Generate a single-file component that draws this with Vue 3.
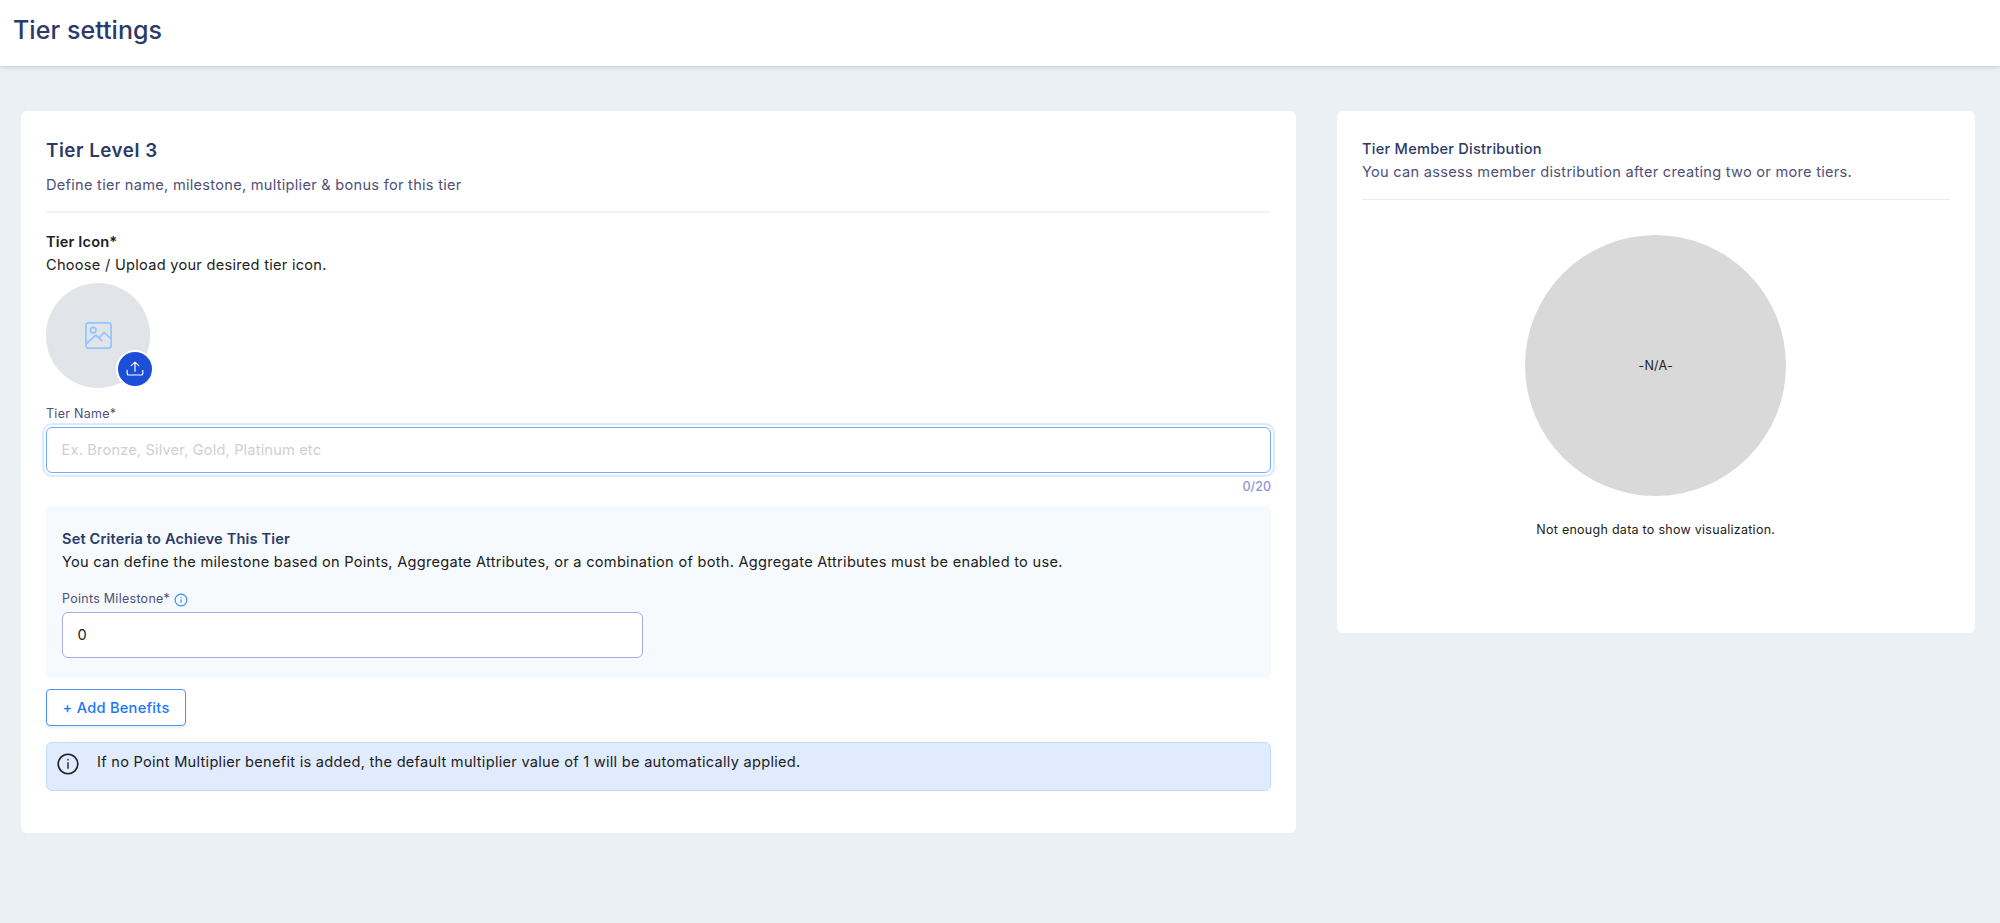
<template>
    <div class="page">
        <header class="header">
            <h1>Tier settings</h1>
        </header>

        <main class="content">
            <section class="card tier-card">
                <h2>Tier Level {{ tierLevel }}</h2>
                <p class="muted subtitle">Define tier name, milestone, multiplier &amp; bonus for this tier</p>
                <hr>

                <h4 class="dark">Tier Icon*</h4>
                <p>Choose / Upload your desired tier icon.</p>
                <div class="tier-icon">
                    <svg class="image-icon" viewBox="0 0 27 27" fill="none" stroke="currentColor" stroke-width="1.7">
                        <rect x="0.9" y="0.9" width="25.2" height="25.2" rx="2.6" />
                        <circle cx="8.2" cy="8.1" r="2.8" />
                        <path d="M1 22 L10.8 13.2 L17.2 19.2 M13.8 16 L19.2 10.4 L26 17" stroke-linejoin="round" />
                    </svg>
                    <button class="upload" type="button" aria-label="Upload">
                        <svg viewBox="0 0 18 16" fill="none" stroke="currentColor" stroke-width="1.2" stroke-linecap="round" stroke-linejoin="round">
                            <path d="M9 10.2 V1.4 M5.2 4.6 L9 1.3 L12.8 4.6" />
                            <path d="M1.2 9.4 V12.4 Q1.2 14 2.8 14 H15.2 Q16.8 14 16.8 12.4 V9.4" />
                        </svg>
                    </button>
                </div>

                <label class="field-label" for="tierName">Tier Name*</label>
                <input id="tierName" v-model="tierName" class="field focused" type="text" :maxlength="maxLength" placeholder="Ex. Bronze, Silver, Gold, Platinum etc">
                <div class="counter">{{ tierName.length }}/{{ maxLength }}</div>

                <div class="criteria">
                    <h4>Set Criteria to Achieve This Tier</h4>
                    <p>You can define the milestone based on Points, Aggregate Attributes, or a combination of both. Aggregate Attributes must be enabled to use.</p>
                    <label class="field-label" for="milestone">
                        Points Milestone*
                        <svg class="hint" viewBox="0 0 14 14" fill="none" stroke="currentColor">
                            <circle cx="7" cy="7" r="5.9" stroke-width="1.2" />
                            <path d="M7 6.3 V9.8 M7 4 V5" stroke-width="1.2" />
                        </svg>
                    </label>
                    <input id="milestone" v-model="milestone" class="field" type="text">
                </div>

                <button class="add-button" type="button">+ Add Benefits</button>

                <div class="alert">
                    <svg viewBox="0 0 22 22" fill="none" stroke="currentColor">
                        <circle cx="11" cy="11" r="9.8" stroke-width="1.6" />
                        <path d="M11 9.2 V15.8 M11 6 V7.6" stroke-width="1.4" />
                    </svg>
                    <span>If no Point Multiplier benefit is added, the default multiplier value of 1 will be automatically applied.</span>
                </div>
            </section>

            <aside class="card chart-card">
                <h4>Tier Member Distribution</h4>
                <p class="muted">You can assess member distribution after creating two or more tiers.</p>
                <hr>
                <div class="chart">-N/A-</div>
                <p class="chart-note">Not enough data to show visualization.</p>
            </aside>
        </main>
    </div>
</template>

<script setup>
    import { ref } from 'vue'

    const tierLevel = ref(3)
    const maxLength = 20
    const tierName = ref('')
    const milestone = ref('0')
</script>

<style>
body {
    margin: 0;
    background: #ebf0f4;
}
</style>

<style scoped>
.page, .page * {
    box-sizing: border-box;
}
.page {
    min-height: 923px;
    background: #ebf0f4;
    color: #212121;
    font-family: Inter, sans-serif;
    font-size: 14.6px;
    line-height: 23px;
    letter-spacing: 0.27px;
}
h1, h2, h4, p {
    margin: 0;
}
input, button {
    font: inherit;
    letter-spacing: inherit;
}
.header {
    height: 65.5px;
    padding: 14px 13px 0;
    background: #fff;
    box-shadow: 0 1px 4px rgba(60, 100, 150, 0.28);
}
h1 {
    font-size: 25px;
    font-weight: 500;
    line-height: 32px;
    letter-spacing: 0.05px;
    color: #2b3a67;
}
h2 {
    font-size: 18.8px;
    font-weight: 600;
    line-height: 28px;
    letter-spacing: 0.52px;
    color: #2b3a67;
}
h4 {
    font-size: 14.6px;
    font-weight: 600;
    letter-spacing: 0.15px;
    color: #2b3a67;
}
.dark {
    color: #212121;
}
.muted {
    color: #4f5078;
}
.content {
    display: flex;
    align-items: flex-start;
    gap: 41px;
    padding: 45.5px 25.5px 0 21px;
}
.card {
    padding: 25.5px 25px 0;
    background: #fff;
    border-radius: 6px;
}
.tier-card {
    width: 1275px;
    height: 722px;
}
.chart-card {
    flex: 1;
    height: 522px;
    padding-top: 26.5px;
}
hr {
    height: 2px;
    margin: 14.5px 0 17.5px;
    border: 0;
    background: #f3f4f6;
}
.chart-card h4 {
    font-weight: 500;
    letter-spacing: 0.25px;
}
.chart-card hr {
    height: 1px;
    margin: 15.5px 0 35px;
    background: #e9ebed;
}
.subtitle {
    margin-top: 9px;
}
.tier-icon {
    display: flex;
    align-items: center;
    justify-content: center;
    position: relative;
    width: 104.4px;
    height: 104.4px;
    margin-top: 6.8px;
    border-radius: 50%;
    background: #e1e5ea;
}
.image-icon {
    width: 27px;
    height: 27px;
    color: #93c5fd;
}
.upload {
    display: flex;
    align-items: center;
    justify-content: center;
    position: absolute;
    right: -3.5px;
    bottom: -0.2px;
    width: 38px;
    height: 38px;
    padding: 0;
    border: 2px solid #fff;
    border-radius: 50%;
    background: #1d4ed8;
    color: #fff;
}
.upload svg {
    width: 18px;
    height: 16px;
}
.field-label {
    display: flex;
    align-items: center;
    gap: 3.5px;
    margin-top: 16px;
    font-size: 12.5px;
    line-height: 20px;
    color: #4f5078;
}
.field {
    display: block;
    width: 100%;
    height: 46px;
    margin-top: 3px;
    padding: 0 14.6px;
    border: 1px solid #a5aedd;
    border-radius: 6px;
    outline: none;
    background: #fff;
    color: #212121;
}
.focused {
    border-color: #74acf8;
    box-shadow: 0 0 0 2px #fafcff, 0 0 0 4px #dbeafe;
}
.field::placeholder {
    color: #d0d0d0;
    letter-spacing: 0.17px;
    opacity: 1;
}
.counter {
    margin-top: 4px;
    font-size: 12.5px;
    font-weight: 500;
    line-height: 20px;
    letter-spacing: 0;
    text-align: right;
    color: #9297cf;
}
.criteria {
    height: 172px;
    margin-top: 9.5px;
    padding: 21.5px 16px 0;
    border-radius: 4px;
    background: #f6fafd;
}
.criteria .field {
    width: 581px;
}
.criteria .field-label {
    margin-top: 15.5px;
}
.hint {
    width: 14px;
    height: 14px;
    margin-top: 2px;
    color: #3b8cf5;
}
.add-button {
    display: block;
    width: 140px;
    height: 37px;
    margin-top: 11px;
    padding: 2px 0 0;
    border: 1px solid #4a95f7;
    border-radius: 4px;
    background: #fff;
    box-shadow: 0 2px 3px rgba(0, 0, 0, 0.08);
    font-weight: 500;
    color: #1a76f9;
}
.alert {
    display: flex;
    gap: 18px;
    height: 49px;
    margin-top: 16.3px;
    padding: 8px 10px 0;
    border: 1px solid #bfdbfe;
    border-radius: 6px;
    background: #e0ebfe;
}
.alert svg {
    width: 22px;
    height: 22px;
    margin-top: 2px;
}
.chart {
    display: flex;
    align-items: center;
    justify-content: center;
    width: 261px;
    height: 261px;
    margin: 0 auto;
    border-radius: 50%;
    background: #d9d9d9;
    font-size: 12.5px;
}
.chart-note {
    margin-top: 22px;
    font-size: 12.5px;
    text-align: center;
}
</style>
